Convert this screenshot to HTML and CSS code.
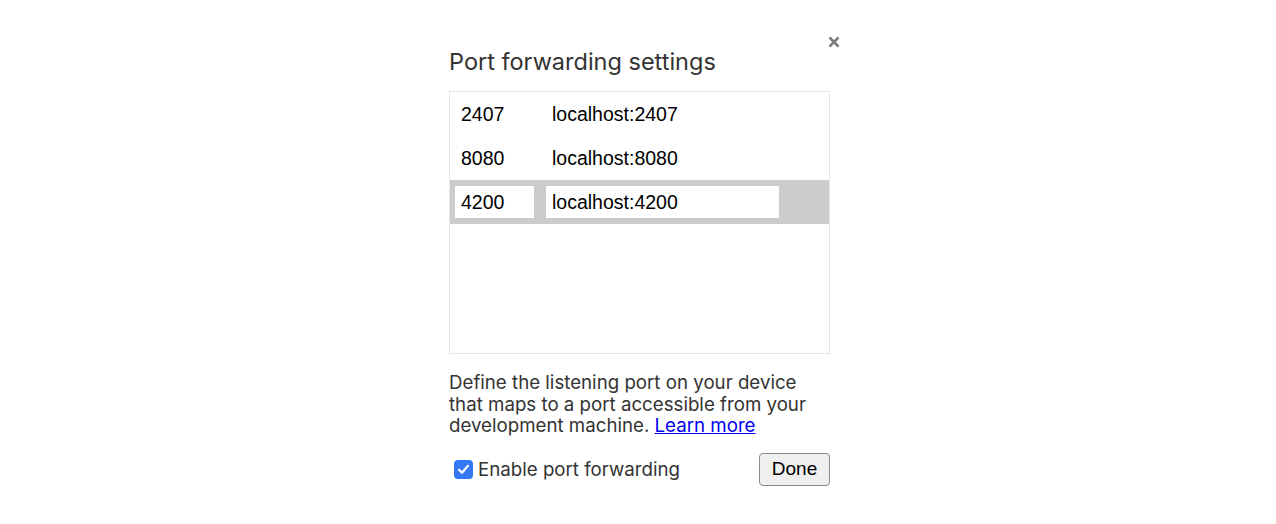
FILE: index.html
```html
<!DOCTYPE html>
<html>
<head>
<meta charset="utf-8">
<link rel="stylesheet" href="styles.css">
</head>
<body>
<div class="page">
  <div class="dialog">
    <button class="close" aria-label="Close">
      <svg width="12" height="12" viewBox="0 0 12 12"><path d="M1.5 1.5 L10.5 10.5 M10.5 1.5 L1.5 10.5" stroke="#7a7a7a" stroke-width="2.6" stroke-linecap="butt"/></svg>
    </button>
    <h1 class="title">Port forwarding settings</h1>
    <div class="list">
      <div class="row">
        <span class="port">2407</span>
        <span class="addr">localhost:2407</span>
      </div>
      <div class="row">
        <span class="port">8080</span>
        <span class="addr">localhost:8080</span>
      </div>
      <div class="row selected">
        <span class="field port-field">4200</span>
        <span class="field addr-field">localhost:4200</span>
      </div>
    </div>
    <p class="desc">Define the listening port on your device that maps to a port accessible from your development machine. <a href="#" class="link">Learn more</a></p>
    <div class="footer">
      <label class="check">
        <span class="box"><svg width="19" height="19" viewBox="0 0 19 19"><path d="M5 9.8 L8 12.8 L14 5.8" fill="none" stroke="#fff" stroke-width="2.2" stroke-linecap="round" stroke-linejoin="round"/></svg></span>
        <span class="check-label">Enable port forwarding</span>
      </label>
      <button class="done">Done</button>
    </div>
  </div>
</div>
</body>
</html>
```
FILE: styles.css
```css
html, body {
  margin: 0;
  padding: 0;
  background: #ffffff;
}
.page {
  display: flex;
  justify-content: flex-start;
  padding-left: 449px;
}
.dialog {
  position: relative;
  width: 381px;
  padding-top: 48px;
  font-family: Inter, "Liberation Sans", sans-serif;
  color: #333333;
}
.close {
  position: absolute;
  left: 379px;
  top: 36px;
  width: 12px;
  height: 12px;
  padding: 0;
  border: 0;
  background: transparent;
  display: block;
}
.close svg { display: block; }
.title {
  margin: 0 0 16px 0;
  font-size: 23.5px;
  line-height: 27px;
  font-weight: 400;
  color: #333333;
}
.list {
  height: 261px;
  border: 1px solid #e6e6e6;
  font-family: "Liberation Sans", Arial, sans-serif;
  font-size: 19.5px;
  color: #000000;
}
.row {
  display: flex;
  align-items: center;
  height: 44px;
  padding-left: 11px;
}
.port {
  width: 91px;
}
.row.selected {
  background: #cccccc;
  padding-left: 5px;
  gap: 12px;
}
.field {
  display: flex;
  align-items: center;
  height: 32px;
  background: #ffffff;
  padding-left: 6px;
  box-sizing: border-box;
}
.port-field { width: 79px; }
.addr-field { width: 233px; }
.desc {
  margin: 18px 0 0 0;
  max-width: 372px;
  font-size: 18.7px;
  line-height: 21.6px;
  color: #333333;
}
.link {
  color: #0000ee;
  text-decoration: underline;
}
.footer {
  display: flex;
  align-items: center;
  justify-content: space-between;
  margin-top: 16px;
}
.check {
  display: flex;
  align-items: center;
  gap: 5px;
  padding-left: 5px;
}
.box {
  width: 19px;
  height: 19px;
  border-radius: 4px;
  background: #3478f6;
  display: block;
}
.box svg { display: block; }
.check-label {
  font-size: 18.7px;
  color: #333333;
}
.done {
  width: 71px;
  height: 33px;
  margin-right: 0;
  font-family: "Liberation Sans", Arial, sans-serif;
  font-size: 19px;
  color: #000000;
  background: #efefef;
  border: 1px solid #8a8a8a;
  border-radius: 4px;
  padding: 0;
}
```
